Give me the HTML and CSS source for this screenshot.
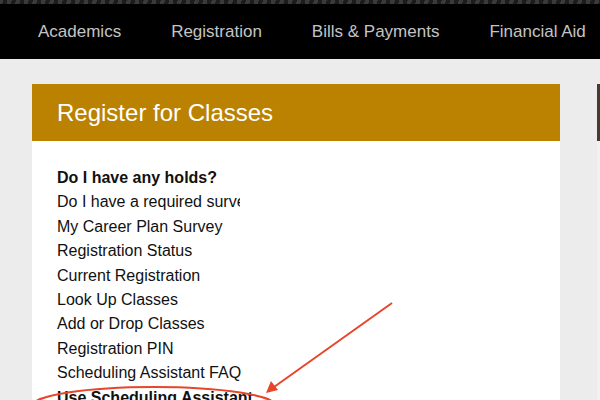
FILE: index.html
```html
<!DOCTYPE html>
<html lang="en">
<head>
    <meta charset="UTF-8">
    <title>Register for Classes</title>
    <link rel="stylesheet" href="styles.css">
</head>
<body>
    <nav class="topnav">
        <a href="#">Academics</a>
        <a href="#">Registration</a>
        <a href="#">Bills &amp; Payments</a>
        <a href="#">Financial Aid</a>
    </nav>

    <main class="content">
        <section class="panel">
            <h2 class="panel-title">Register for Classes</h2>
            <ul class="links">
                <li class="strong">Do I have any holds?</li>
                <li><span class="clipped">Do I have a required survey?</span></li>
                <li>My Career Plan Survey</li>
                <li>Registration Status</li>
                <li>Current Registration</li>
                <li>Look Up Classes</li>
                <li>Add or Drop Classes</li>
                <li>Registration PIN</li>
                <li>Scheduling Assistant FAQ</li>
                <li class="strong">Use Scheduling Assistant</li>
            </ul>
        </section>
        <section class="panel side">
            <h2 class="panel-title dark">&nbsp;</h2>
            <div class="side-body"></div>
        </section>
    </main>

    <!-- annotation drawn over the screenshot -->
    <svg class="markup" width="600" height="400" viewBox="0 0 600 400">
        <line x1="392" y1="303" x2="274" y2="387" stroke="#e8452a" stroke-width="2"/>
        <polygon points="266,393 271,381 278,390" fill="#e8452a"/>
        <ellipse cx="154" cy="406" rx="122" ry="19" fill="none" stroke="#e8452a" stroke-width="2"/>
    </svg>
</body>
</html>
```

FILE: styles.css
```css
* {
    margin: 0;
    padding: 0;
    box-sizing: border-box;
}

body {
    width: 600px;
    height: 400px;
    overflow: hidden;
    position: relative;
    background: #ececec;
    font-family: 'Liberation Sans', Arial, sans-serif;
    color: #111;
}

.topnav {
    height: 59px;
    background: #000;
    border-top: 4px solid #2e2e2e;
    border-image: repeating-linear-gradient(135deg, #3a3a3a 0 3px, #1c1c1c 3px 6px) 1;
    display: flex;
    align-items: center;
    gap: 50px;
    padding-left: 38px;
    white-space: nowrap;
}

.topnav a {
    color: #c4c4c4;
    text-decoration: none;
    font-size: 17px;
}

.content {
    display: flex;
    gap: 37px;
    padding: 25px 0 0 32px;
}

.panel {
    flex: 0 0 528px;
    background: #fff;
    height: 330px;
}

.panel.side {
    flex: 0 0 200px;
    background: #f1f1f1;
}

.panel-title {
    height: 57px;
    background: #ba8200;
    color: #fff;
    font-size: 24px;
    font-weight: normal;
    line-height: 57px;
    padding-left: 25px;
}

.panel-title.dark {
    background: #483a30;
}

.links {
    list-style: none;
    padding: 25px 0 0 25px;
    font-size: 16px;
    line-height: 24.4px;
}

.links .strong {
    font-weight: bold;
}

.clipped {
    display: inline-block;
    width: 183px;
    overflow: hidden;
    white-space: nowrap;
    vertical-align: top;
}

.markup {
    position: absolute;
    left: 0;
    top: 0;
    pointer-events: none;
}
```
